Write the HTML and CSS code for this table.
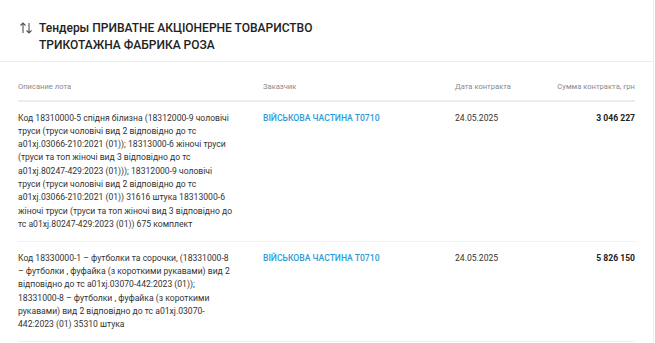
FILE: index.html
```html
<!DOCTYPE html>
<html lang="uk">
<head>
<meta charset="utf-8">
<link rel="stylesheet" href="styles.css">
</head>
<body>
<div class="card">
  <div class="card-head">
    <svg class="sort-icon" width="14" height="14" viewBox="0 0 14 14" fill="none" stroke="#555" stroke-width="1.1">
      <path d="M4 12V2M1.5 4.5L4 2l2.5 2.5"/>
      <path d="M10 2v10M7.5 9.5L10 12l2.5-2.5"/>
    </svg>
    <h1 class="title">Тендеры ПРИВАТНЕ АКЦІОНЕРНЕ ТОВАРИСТВО<br>ТРИКОТАЖНА ФАБРИКА РОЗА</h1>
  </div>
  <div class="card-body">
    <table class="lots">
      <thead>
        <tr>
          <th class="c-desc">Описание лота</th>
          <th class="c-cust">Заказчик</th>
          <th class="c-date">Дата контракта</th>
          <th class="c-sum">Сумма контракта, грн</th>
        </tr>
      </thead>
      <tbody>
        <tr>
          <td class="c-desc">Код 18310000-5 спідня білизна (18312000-9 чоловічі труси (труси чоловічі вид 2 відповідно до тс a01xj.03066-210:2021 (01)); 18313000-6 жіночі труси (труси та топ жіночі вид 3 відповідно до тс a01xj.80247-429:2023 (01))); 18312000-9 чоловічі труси (труси чоловічі вид 2 відповідно до тс a01xj.03066-210:2021 (01)) 31616 штука 18313000-6 жіночі труси (труси та топ жіночі вид 3 відповідно до тс a01xj.80247-429:2023 (01)) 675 комплект</td>
          <td class="c-cust"><a class="link" href="#">ВІЙСЬКОВА ЧАСТИНА Т0710</a></td>
          <td class="c-date">24.05.2025</td>
          <td class="c-sum">3 046 227</td>
        </tr>
        <tr>
          <td class="c-desc">Код 18330000-1 – футболки та сорочки, (18331000-8 – футболки , фуфайка (з короткими рукавами) вид 2 відповідно до тс a01xj.03070-442:2023 (01)); 18331000-8 – футболки , фуфайка (з короткими рукавами) вид 2 відповідно до тс a01xj.03070-442:2023 (01) 35310 штука</td>
          <td class="c-cust"><a class="link" href="#">ВІЙСЬКОВА ЧАСТИНА Т0710</a></td>
          <td class="c-date">24.05.2025</td>
          <td class="c-sum">5 826 150</td>
        </tr>
      </tbody>
    </table>
  </div>
</div>
</body>
</html>
```

FILE: styles.css
```css
html, body {
  margin: 0;
  padding: 0;
  background: #fff;
}
body {
  font-family: Roboto, "Liberation Sans", Arial, sans-serif;
  color: #333;
}
.card {
  width: 653px;
  border-right: 1px solid #ececec;
  background: #fff;
}
.card-head {
  display: flex;
  align-items: flex-start;
  gap: 6px;
  padding: 20px 18px 7px 19px;
  border-bottom: 1px solid #ececec;
}
.sort-icon {
  flex: none;
  margin-top: 1px;
}
.title {
  margin: 0;
  font-size: 12px;
  line-height: 17px;
  font-weight: 500;
  color: #222;
}
.card-body {
  padding: 0 18px;
}
.lots {
  width: 617px;
  border-collapse: collapse;
  table-layout: fixed;
}
.lots th {
  font-weight: 400;
  font-size: 7.6px;
  color: #8a8a8a;
  text-align: left;
  padding: 19px 0 7px 0;
  border-bottom: 2px solid #ececec;
  line-height: 12px;
  white-space: nowrap;
}
.lots td {
  font-size: 8.6px;
  line-height: 13.3px;
  vertical-align: top;
  padding: 9.5px 0 10px 0;
  border-bottom: 1px solid #f1f1f1;
  color: #333;
}
.c-desc { width: 245px; }
.lots td.c-desc { padding-right: 29px; }
.c-cust { width: 192px; }
.c-date { width: 100px; }
.lots th.c-sum, .lots td.c-sum { text-align: right; }
.lots td.c-sum { font-weight: 700; color: #222; }
.link {
  color: #2f9ad6;
  text-decoration: none;
  font-weight: 500;
}
```
